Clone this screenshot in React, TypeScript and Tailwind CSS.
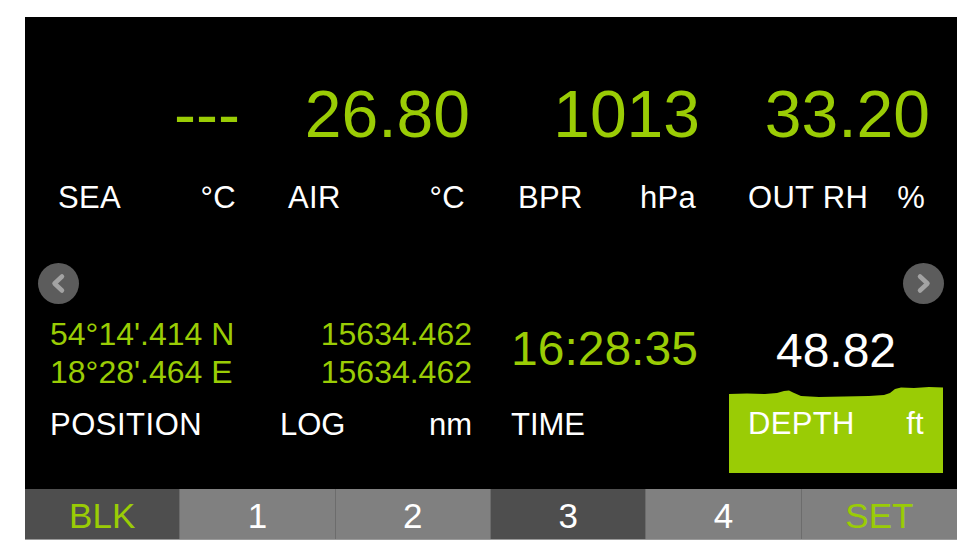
import React from "react";

const GREEN = "text-[#9acc05]";

// top readouts: value + label + unit, paddings tuned per column
const topReadouts = [
  { value: "---", label: "SEA", unit: "°C", valuePad: "pr-[18px]", labelPad: "pl-[33px] pr-[22px]" },
  { value: "26.80", label: "AIR", unit: "°C", valuePad: "pr-[21px]", labelPad: "pl-[30px] pr-[26px]" },
  { value: "1013", label: "BPR", unit: "hPa", valuePad: "pr-[24px]", labelPad: "pl-[27px] pr-[28px]" },
  { value: "33.20", label: "OUT RH", unit: "%", valuePad: "pr-[27px]", labelPad: "pl-[24px] pr-[32px]" },
];

const tabs = [
  { label: "BLK", dark: true, green: true },
  { label: "1", dark: false, green: false },
  { label: "2", dark: false, green: false },
  { label: "3", dark: true, green: false },
  { label: "4", dark: false, green: false },
  { label: "SET", dark: false, green: true },
];

const Arrow: React.FC<{ dir: "left" | "right" }> = ({ dir }) => (
  <div className="w-[41px] h-[41px] rounded-full bg-[#5c5c5c] flex items-center justify-center">
    <svg width="41" height="41" viewBox="0 0 41 41">
      <path
        d={dir === "left" ? "M24 13.5 L16.5 20.5 L24 27.5" : "M17 13.5 L24.5 20.5 L17 27.5"}
        fill="none"
        stroke="#a3a3a3"
        strokeWidth="4.5"
        strokeLinecap="round"
        strokeLinejoin="round"
      />
    </svg>
  </div>
);

const App: React.FC = () => {
  return (
    <div className="w-[979px] h-[557px] bg-white overflow-hidden font-['Liberation_Sans',Arial,sans-serif]">
      <div className="ml-[25px] mt-[17px] w-[932px]">
        {/* black display area */}
        <div className="h-[472px] bg-black flex flex-col">
          {/* big values */}
          <div className="grid grid-cols-4 mt-[64px]">
            {topReadouts.map((r) => (
              <div key={r.label} className={`text-right text-[66px] leading-none ${GREEN} ${r.valuePad}`}>
                {r.value}
              </div>
            ))}
          </div>
          {/* labels */}
          <div className="grid grid-cols-4 mt-[35px]">
            {topReadouts.map((r) => (
              <div key={r.label} className={`flex justify-between text-[31px] tracking-[0.3px] leading-none text-white ${r.labelPad}`}>
                <span>{r.label}</span>
                <span>{r.unit}</span>
              </div>
            ))}
          </div>

          {/* page arrows */}
          <div className="flex justify-between px-[13px] mt-[50px]">
            <Arrow dir="left" />
            <Arrow dir="right" />
          </div>

          {/* lower readouts */}
          <div className="grid grid-cols-4 mt-[11px]">
            <div className="flex flex-col pl-[25px]">
              <div className={`text-[32px] leading-[38px] ${GREEN}`}>
                <div>54°14'.414 N</div>
                <div>18°28'.464 E</div>
              </div>
              <div className="mt-[18px] text-[31px] tracking-[0.5px] leading-none text-white">POSITION</div>
            </div>

            <div className="flex flex-col pl-[22px] pr-[19px]">
              <div className={`text-right text-[32px] leading-[38px] ${GREEN}`}>
                <div>15634.462</div>
                <div>15634.462</div>
              </div>
              <div className="mt-[18px] flex justify-between text-[31px] leading-none text-white">
                <span>LOG</span>
                <span>nm</span>
              </div>
            </div>

            <div className="flex flex-col pl-[20px]">
              <div className={`pt-[10px] text-[48px] leading-none ${GREEN}`}>16:28:35</div>
              <div className="mt-[36px] text-[31px] leading-none text-white">TIME</div>
            </div>

            <div className="flex flex-col pl-[5px] pr-[14px]">
              <div className="pt-[12px] text-center text-[48px] leading-none text-white">48.82</div>
              <svg className="block mt-[10px]" width="214" height="13" viewBox="0 0 214 13" preserveAspectRatio="none">
                <path
                  d="M0 9 L18 8.5 L36 9 L48 8 L55 6 L60 5.5 L64 7.5 L72 11 L90 12 L115 11.5 L140 11 L155 10 L161 8 L166 4 L172 2.5 L185 3 L200 2 L214 2.5 L214 13 L0 13 Z"
                  fill="#9acc05"
                />
              </svg>
              <div className="h-[75px] bg-[#9acc05] flex justify-between items-start pt-[10px] px-[19px] text-[31px] tracking-[0.3px] leading-none text-white">
                <span>DEPTH</span>
                <span>ft</span>
              </div>
            </div>
          </div>
        </div>

        {/* page tabs */}
        <div className="grid grid-cols-6 h-[51px] border-b border-[#9a9a9a]">
          {tabs.map((t) => (
            <div
              key={t.label}
              className={`flex items-center justify-center pt-[3px] text-[35px] leading-none border-r border-[#6c6c6c] last:border-r-0 ${
                t.dark ? "bg-[#4e4e4e]" : "bg-[#808080]"
              } ${t.green ? GREEN : "text-white"}`}
            >
              {t.label}
            </div>
          ))}
        </div>
      </div>
    </div>
  );
};

export default App;
